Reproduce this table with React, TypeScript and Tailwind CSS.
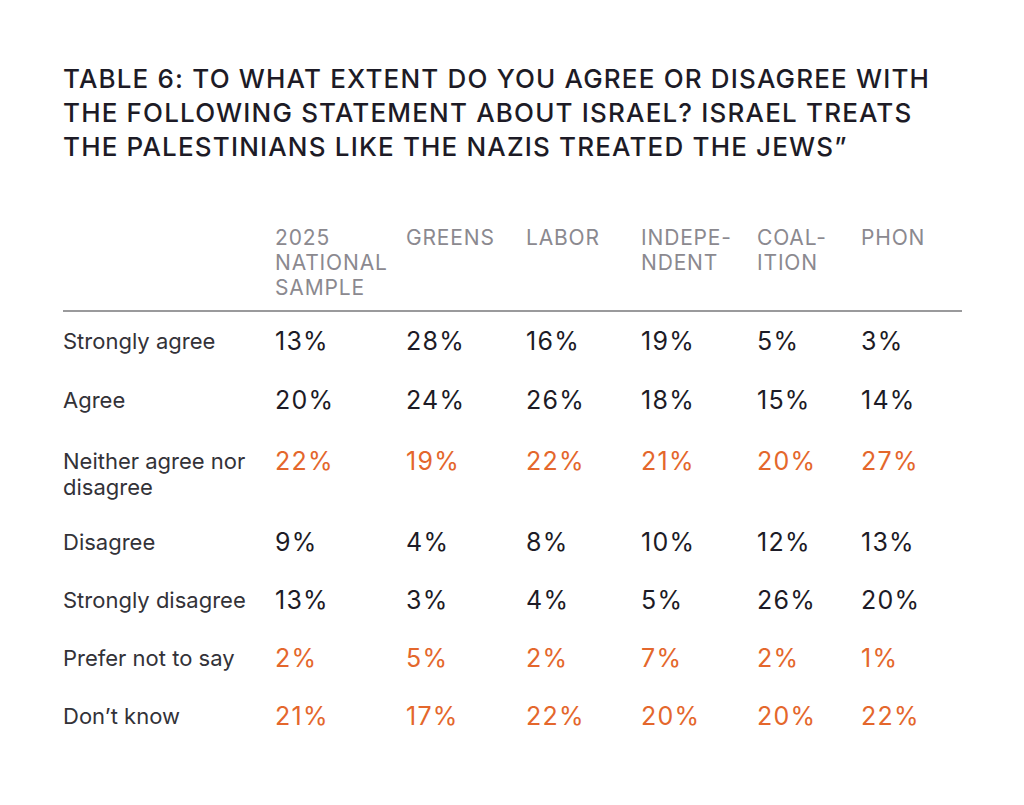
import React from "react";

type Row = { label: string; values: string[]; accent: boolean; pad: string };

const rows: Row[] = [
  { label: "Strongly agree", values: ["13%", "28%", "16%", "19%", "5%", "3%"], accent: false, pad: "pt-[16px] pb-[16px]" },
  { label: "Agree", values: ["20%", "24%", "26%", "18%", "15%", "14%"], accent: false, pad: "pt-[17px] pb-[15px]" },
  { label: "Neither agree nor disagree", values: ["22%", "19%", "22%", "21%", "20%", "27%"], accent: true, pad: "pt-[20px] pb-[13px]" },
  { label: "Disagree", values: ["9%", "4%", "8%", "10%", "12%", "13%"], accent: false, pad: "pt-[16px] pb-[16px]" },
  { label: "Strongly disagree", values: ["13%", "3%", "4%", "5%", "26%", "20%"], accent: false, pad: "pt-[16px] pb-[16px]" },
  { label: "Prefer not to say", values: ["2%", "5%", "2%", "7%", "2%", "1%"], accent: true, pad: "pt-[16px] pb-[16px]" },
  { label: "Don\u2019t know", values: ["21%", "17%", "22%", "20%", "20%", "22%"], accent: true, pad: "pt-[16px] pb-[16px]" },
];

const headers: string[][] = [
  ["2025", "NATIONAL", "SAMPLE"],
  ["GREENS"],
  ["LABOR"],
  ["INDEPE-", "NDENT"],
  ["COAL-", "ITION"],
  ["PHON"],
];

const gridCols = "grid grid-cols-[212px_131px_120px_115px_116px_104px_1fr]";

export default function App() {
  return (
    <div
      className="w-[1024px] h-[805px] bg-white pl-[63px] pr-[62px] pt-[62px] overflow-hidden"
      style={{ fontFamily: 'Inter, "Liberation Sans", Arial, sans-serif' }}
    >
      <h1 className="text-[26px] leading-[34px] text-[#1d1b26] font-medium tracking-[0.045em] whitespace-nowrap">
        TABLE 6: TO WHAT EXTENT DO YOU AGREE OR DISAGREE WITH
        <br />
        THE FOLLOWING STATEMENT ABOUT ISRAEL? ISRAEL TREATS
        <br />
        THE PALESTINIANS LIKE THE NAZIS TREATED THE JEWS{"\u201D"}
      </h1>

      <div className={`${gridCols} mt-[61px] pb-[10px] border-b-2 border-[#9a9a9c]`}>
        <div />
        {headers.map((h, i) => (
          <div key={i} className="text-[21px] leading-[25px] tracking-[0.04em] text-[#8b898f]">
            {h.map((line, j) => (
              <div key={j}>{line}</div>
            ))}
          </div>
        ))}
      </div>

      {rows.map((r, i) => (
        <div key={i} className={`${gridCols} items-start ${r.pad}`}>
          <div className="text-[22px] leading-[26px] text-[#333238] pr-[16px]">{r.label}</div>
          {r.values.map((v, j) => (
            <div
              key={j}
              className={`text-[25px] leading-[26px] tracking-[0.05em] ${r.accent ? "text-[#e4672c]" : "text-[#1d1b26]"}`}
            >
              {v}
            </div>
          ))}
        </div>
      ))}
    </div>
  );
}
